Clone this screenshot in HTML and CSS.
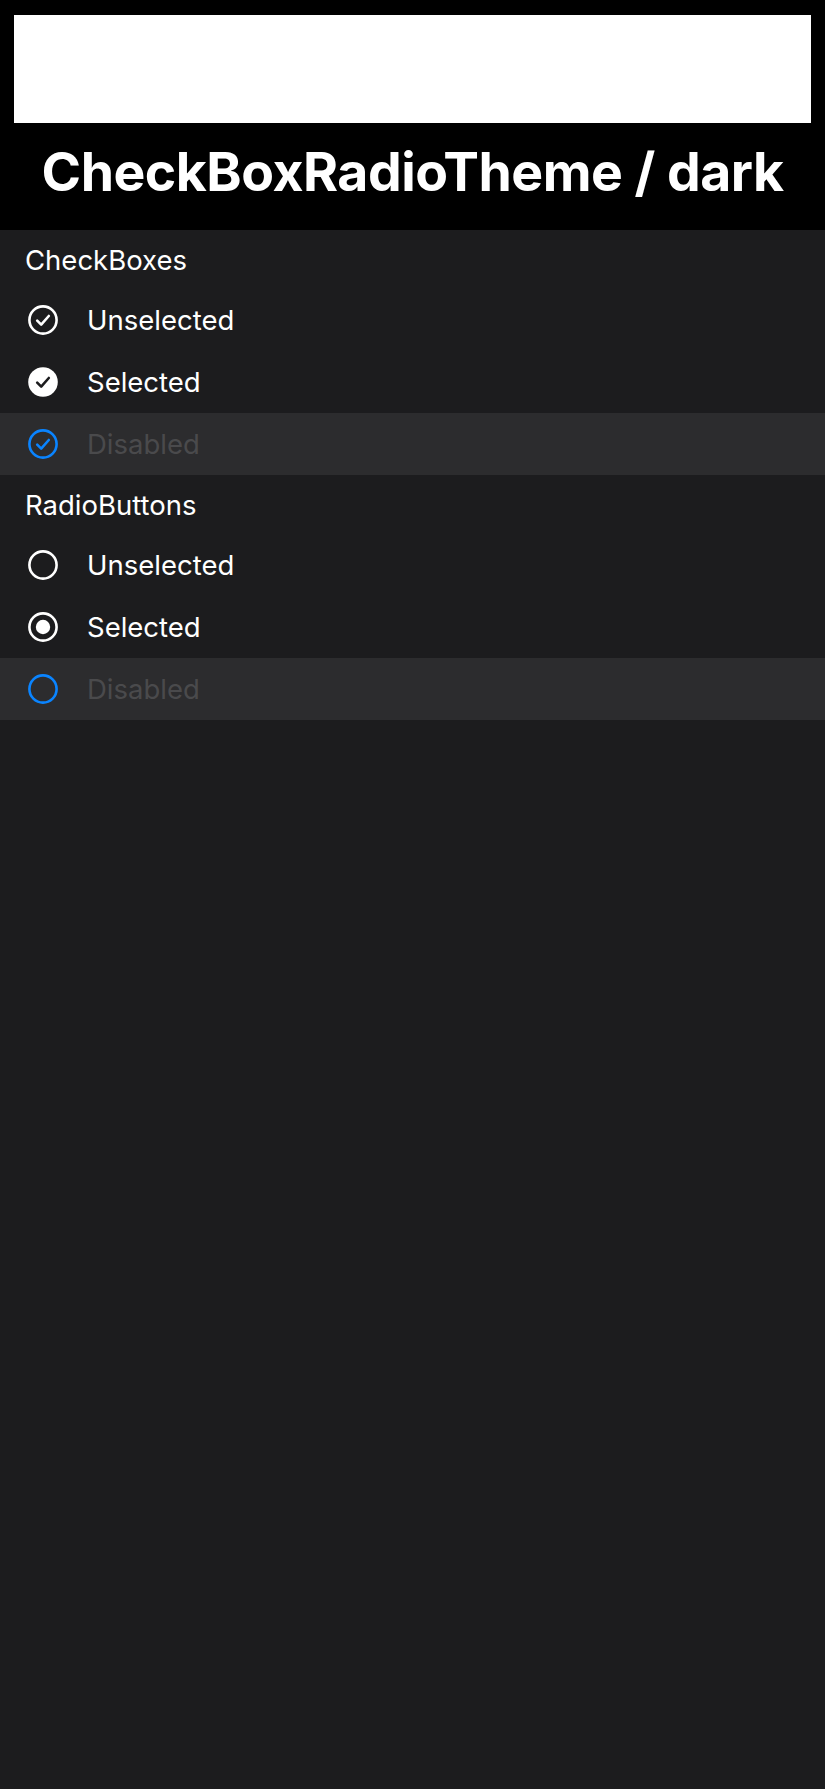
FILE: index.html
```html
<!DOCTYPE html>
<html lang="en">
<head>
  <meta charset="UTF-8">
  <meta name="viewport" content="width=device-width, initial-scale=1.0">
  <title>CheckBoxRadioTheme / dark</title>
  <link rel="stylesheet" href="styles.css">
</head>
<body>
  <header class="top">
    <div class="preview"></div>
    <h1>CheckBoxRadioTheme / dark</h1>
  </header>

  <!-- CheckBoxes -->
  <section class="group">
    <div class="group-title">CheckBoxes</div>
    <div class="row">
      <svg class="icon" viewBox="0 0 30 30">
        <circle cx="15" cy="15" r="13.6" fill="none" stroke="#fff" stroke-width="2.6"/>
        <path d="M9.2 15.6 L13.2 19.6 L20.8 11" fill="none" stroke="#fff" stroke-width="2.6" stroke-linecap="round" stroke-linejoin="round"/>
      </svg>
      <span class="label">Unselected</span>
    </div>
    <div class="row">
      <svg class="icon" viewBox="0 0 30 30">
        <circle cx="15" cy="15" r="14.8" fill="#fff"/>
        <path d="M9.2 15.6 L13.2 19.6 L20.8 11" fill="none" stroke="#1c1c1e" stroke-width="2.6" stroke-linecap="round" stroke-linejoin="round"/>
      </svg>
      <span class="label">Selected</span>
    </div>
    <div class="row disabled">
      <svg class="icon" viewBox="0 0 30 30">
        <circle cx="15" cy="15" r="13.6" fill="none" stroke="#0a84ff" stroke-width="2.6"/>
        <path d="M9.2 15.6 L13.2 19.6 L20.8 11" fill="none" stroke="#0a84ff" stroke-width="2.6" stroke-linecap="round" stroke-linejoin="round"/>
      </svg>
      <span class="label">Disabled</span>
    </div>
  </section>

  <!-- RadioButtons -->
  <section class="group">
    <div class="group-title">RadioButtons</div>
    <div class="row">
      <svg class="icon" viewBox="0 0 30 30">
        <circle cx="15" cy="15" r="13.6" fill="none" stroke="#fff" stroke-width="2.6"/>
      </svg>
      <span class="label">Unselected</span>
    </div>
    <div class="row">
      <svg class="icon" viewBox="0 0 30 30">
        <circle cx="15" cy="15" r="13.6" fill="none" stroke="#fff" stroke-width="2.6"/>
        <circle cx="15" cy="15" r="7.2" fill="#fff"/>
      </svg>
      <span class="label">Selected</span>
    </div>
    <div class="row disabled">
      <svg class="icon" viewBox="0 0 30 30">
        <circle cx="15" cy="15" r="13.6" fill="none" stroke="#0a84ff" stroke-width="2.6"/>
      </svg>
      <span class="label">Disabled</span>
    </div>
  </section>
</body>
</html>
```

FILE: styles.css
```css
/* General */
body {
  font-family: 'Inter', 'Noto Sans', sans-serif;
  margin: 0;
  padding: 0;
  background: #1c1c1e;
  color: #fff;
  min-height: 1789px;
}

/* Header */
.top {
  background: #000;
  padding: 15px 14px 0;
  height: 215px;
}

.preview {
  background: #fff;
  height: 108px;
}

.top h1 {
  margin: 0;
  padding-top: 11px;
  text-align: center;
  font-size: 53.5px;
  font-weight: 700;
  letter-spacing: -0.5px;
  line-height: 76px;
}

/* Groups */
.group-title {
  height: 59px;
  display: flex;
  align-items: center;
  padding-left: 25px;
  font-size: 27.5px;
}

.row {
  height: 62px;
  display: flex;
  align-items: center;
  padding-left: 28px;
}

.row.disabled {
  background: #2c2c2e;
}

.icon {
  width: 30px;
  height: 30px;
  flex-shrink: 0;
}

.label {
  margin-left: 29px;
  font-size: 27.5px;
}

.disabled .label {
  color: #4a4a4c;
}
```
